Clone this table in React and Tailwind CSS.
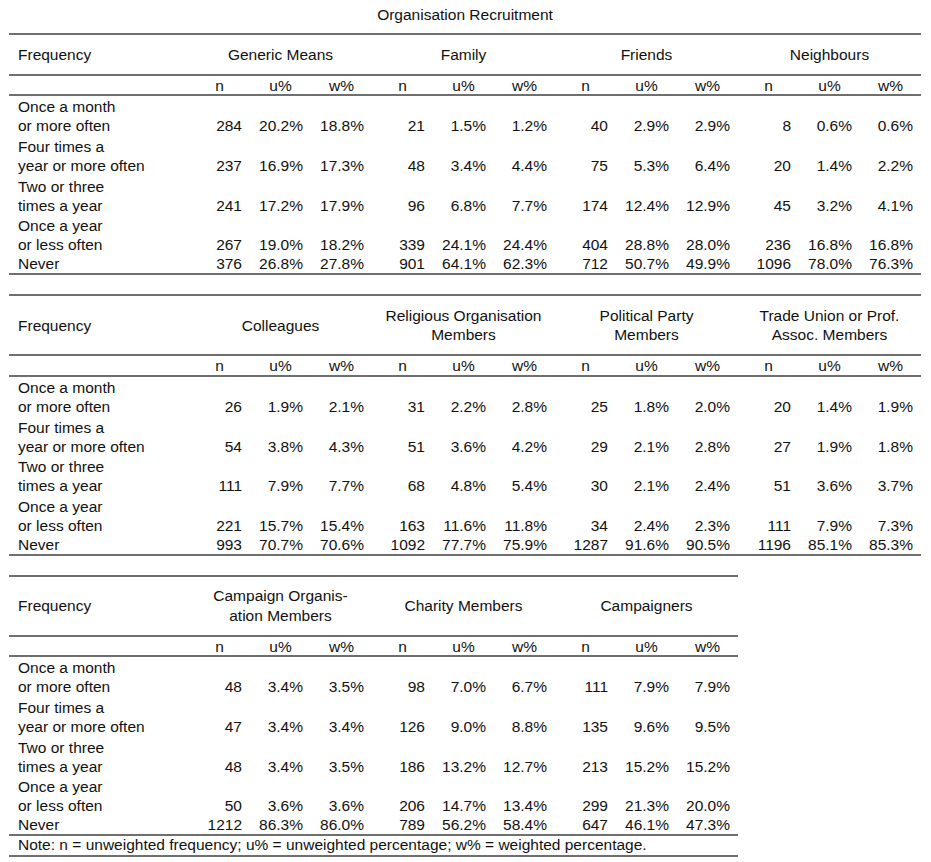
import React from "react";

const t1 = {
  cols: "grid-cols-[180px_repeat(12,61px)]",
  width: "w-[912px]",
  groups: [["Generic Means"], ["Family"], ["Friends"], ["Neighbours"]],
  rows: [
    "284 20.2% 18.8% 21 1.5% 1.2% 40 2.9% 2.9% 8 0.6% 0.6%",
    "237 16.9% 17.3% 48 3.4% 4.4% 75 5.3% 6.4% 20 1.4% 2.2%",
    "241 17.2% 17.9% 96 6.8% 7.7% 174 12.4% 12.9% 45 3.2% 4.1%",
    "267 19.0% 18.2% 339 24.1% 24.4% 404 28.8% 28.0% 236 16.8% 16.8%",
    "376 26.8% 27.8% 901 64.1% 62.3% 712 50.7% 49.9% 1096 78.0% 76.3%",
  ],
};

const t2 = {
  cols: "grid-cols-[180px_repeat(12,61px)]",
  width: "w-[912px]",
  groups: [
    ["Colleagues"],
    ["Religious Organisation", "Members"],
    ["Political Party", "Members"],
    ["Trade Union or Prof.", "Assoc. Members"],
  ],
  rows: [
    "26 1.9% 2.1% 31 2.2% 2.8% 25 1.8% 2.0% 20 1.4% 1.9%",
    "54 3.8% 4.3% 51 3.6% 4.2% 29 2.1% 2.8% 27 1.9% 1.8%",
    "111 7.9% 7.7% 68 4.8% 5.4% 30 2.1% 2.4% 51 3.6% 3.7%",
    "221 15.7% 15.4% 163 11.6% 11.8% 34 2.4% 2.3% 111 7.9% 7.3%",
    "993 70.7% 70.6% 1092 77.7% 75.9% 1287 91.6% 90.5% 1196 85.1% 85.3%",
  ],
};

const t3 = {
  cols: "grid-cols-[180px_repeat(9,61px)]",
  width: "w-[729px]",
  groups: [["Campaign Organis-", "ation Members"], ["Charity Members"], ["Campaigners"]],
  rows: [
    "48 3.4% 3.5% 98 7.0% 6.7% 111 7.9% 7.9%",
    "47 3.4% 3.4% 126 9.0% 8.8% 135 9.6% 9.5%",
    "48 3.4% 3.5% 186 13.2% 12.7% 213 15.2% 15.2%",
    "50 3.6% 3.6% 206 14.7% 13.4% 299 21.3% 20.0%",
    "1212 86.3% 86.0% 789 56.2% 58.4% 647 46.1% 47.3%",
  ],
  note: "Note: n = unweighted frequency; u% = unweighted percentage; w% = weighted percentage.",
};

const labels = [
  ["Once a month", "or more often"],
  ["Four times a", "year or more often"],
  ["Two or three", "times a year"],
  ["Once a year", "or less often"],
  ["Never"],
];

function Table({ t }) {
  const sub = [];
  t.groups.forEach((_, gi) => {
    ["n", "u%", "w%"].forEach((s) => sub.push(<div key={gi + s} className="text-center">{s}</div>));
  });
  return (
    <div className={`${t.width} border-t-2 border-b-2 border-[#6f6f6f]`}>
      <div className={`grid ${t.cols} items-center py-[9.5px] leading-[19.5px] border-b-2 border-[#6f6f6f]`}>
        <div className="pl-[9px]">Frequency</div>
        {t.groups.map((g, i) => (
          <div key={i} className="col-span-3 text-center">
            {g.map((line, j) => (
              <div key={j}>{line}</div>
            ))}
          </div>
        ))}
      </div>
      <div className={`grid ${t.cols} h-[20.5px] items-center border-b-2 border-[#6f6f6f]`}>
        <div></div>
        {sub}
      </div>
      <div className="flex flex-col leading-[19px] pt-[1px]">
        {t.rows.map((r, ri) => (
          <div key={ri} className={`grid ${t.cols} ${ri > 0 && ri < 4 ? "pt-[1.75px]" : ""}`}>
            <div className="pl-[9px]">
              {labels[ri].map((l, li) => (
                <div key={li}>{l}</div>
              ))}
            </div>
            {r.split(" ").map((v, vi) => (
              <div key={vi} className="self-end text-right pr-[8px]">
                {v}
              </div>
            ))}
          </div>
        ))}
      </div>
      {t.note && (
        <div className="border-t-2 border-[#6f6f6f] pl-[9px] leading-[18.5px]">{t.note}</div>
      )}
    </div>
  );
}

export default function App() {
  return (
    <div
      className="bg-white text-[#111] text-[15.5px] leading-[19.5px] pl-[9px] pt-[5px] pb-[6px] min-h-[862px]"
      style={{ fontFamily: '"Liberation Sans", Arial, sans-serif' }}
    >
      <div className="w-[912px] text-center mb-[8.5px]">Organisation Recruitment</div>
      <Table t={t1} />
      <div className="mt-[19px]">
        <Table t={t2} />
      </div>
      <div className="mt-[18.5px]">
        <Table t={t3} />
      </div>
    </div>
  );
}
